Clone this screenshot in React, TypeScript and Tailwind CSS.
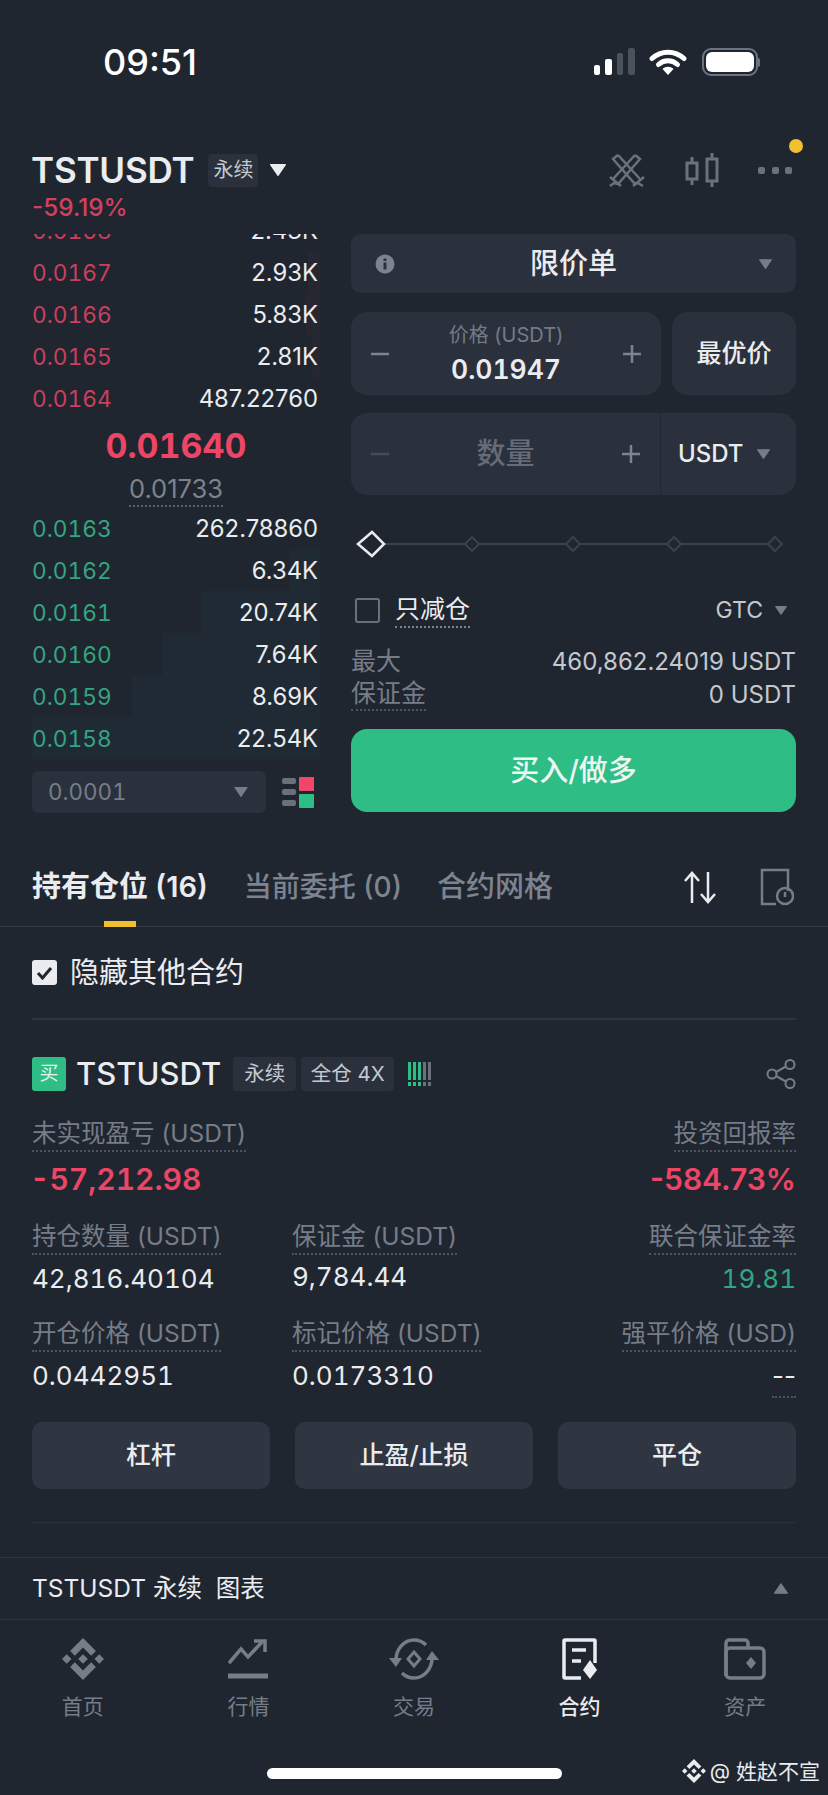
import React from "react";

const FONT = "[font-family:Inter,'Noto_Sans_CJK_SC',sans-serif]";

const asks = [
  ["0.0168", "2.43K", 0],
  ["0.0167", "2.93K", 12],
  ["0.0166", "5.83K", 14],
  ["0.0165", "2.81K", 8],
  ["0.0164", "487.22760", 0],
] as const;

const bids = [
  ["0.0163", "262.78860", 0],
  ["0.0162", "6.34K", 30],
  ["0.0161", "20.74K", 118],
  ["0.0160", "7.64K", 157],
  ["0.0159", "8.69K", 188],
  ["0.0158", "22.54K", 288],
] as const;

function BinanceLogo({ className }: { className: string }) {
  return (
    <svg viewBox="0 0 126.61 126.61" className={className} fill="currentColor">
      <path d="M38.73 53.2l24.59-24.58 24.6 24.6 14.3-14.31L63.32 0 24.43 38.9l14.3 14.3zM0 63.31l14.3-14.31 14.31 14.31-14.31 14.3zM38.73 73.41l24.59 24.59 24.6-24.6 14.31 14.29-38.9 38.91-38.91-38.88-.02-.02zM98 63.31l14.3-14.31 14.31 14.3-14.31 14.32z" />
      <path d="M77.83 63.3L63.32 48.78 52.59 59.51l-1.24 1.23-2.54 2.54 14.51 14.5 14.51-14.47z" />
    </svg>
  );
}

function Caret({ className, up }: { className: string; up?: boolean }) {
  return (
    <svg viewBox="0 0 12 9" className={className} fill="currentColor">
      <path
        d={up ? "M6 .5 11.5 8.5H.5z" : "M.5.5h11L6 8.5z"}
        stroke="currentColor"
        strokeLinejoin="round"
      />
    </svg>
  );
}

function StatusBar() {
  return (
    <div className="flex h-[145px] items-start justify-between pl-[103px] pr-[68px] pt-[41px]">
      <span className="text-[36px] font-medium leading-[42px] text-white">09:51</span>
      <div className="mt-[7px] flex items-center">
        <svg width="42" height="28" viewBox="0 0 42 28">
          <rect x="0" y="17" width="6" height="10" rx="2" fill="#fff" />
          <rect x="11" y="11" width="7" height="16" rx="2" fill="#fff" />
          <rect x="23" y="5" width="6" height="22" rx="2" fill="#4b525d" />
          <rect x="34" y="0" width="7" height="27" rx="2" fill="#4b525d" />
        </svg>
        <svg width="38" height="28" viewBox="0 0 38 28" className="ml-[13px]">
          <path d="M3 10.5C12 2 26 2 35 10.500" fill="none" stroke="#fff" strokeWidth="5" strokeLinecap="round" />
          <path d="M9.500 16.500C15 11.500 23 11.500 28.500 16.500" fill="none" stroke="#fff" strokeWidth="5" strokeLinecap="round" />
          <path d="M13.500 21 19 27l5.500-6c-3-3-8-3-11 0z" fill="#fff" />
        </svg>
        <div className="ml-[15px] flex items-center">
          <div className="h-[28px] w-[56px] rounded-[9px] border-2 border-[#6b7280] p-[2px]">
            <div className="h-full w-full rounded-[6px] bg-white" />
          </div>
          <div className="h-[9px] w-[2px] rounded-r bg-[#6b7280]" />
        </div>
      </div>
    </div>
  );
}

function Header() {
  return (
    <div className="flex h-[89px] items-start justify-between pl-[32px] pr-[36px]">
      <div>
        <div className="flex h-[50px] items-center">
          <span className="-ml-[1px] text-[35px] font-semibold tracking-[-0.2px] text-[#eaecef]">TSTUSDT</span>
          <span className="ml-[14px] flex h-[33px] w-[50px] items-center justify-center rounded-[4px] bg-[#2a313c] text-[20px] text-[#c4c8cf]">
            永续
          </span>
          <Caret className="ml-[12px] h-[12px] w-[16px] text-[#eaecef]" />
        </div>
        <div className="text-[24.300px] font-medium leading-[25px] text-[#d2405f]">-59.19%</div>
      </div>
      <div className="flex h-[50px] items-center text-[#6a717c]">
        <svg width="36" height="34" viewBox="0 0 36 34" fill="none" stroke="currentColor" strokeWidth="2.500">
          <path d="M9 2 4 6l22 25 3-1 5 3M9 2l22 24M26 2l5 4L9 31l-4-1-4 3M26 2 4 26" />
          <path d="M1 24l11 9M35 24l-11 9" />
        </svg>
        <svg width="34" height="36" viewBox="0 0 34 36" fill="none" stroke="currentColor" strokeWidth="3" className="ml-[40px]">
          <rect x="2" y="11" width="10" height="16" />
          <rect x="22" y="7" width="10" height="22" />
          <path d="M7 5v6M7 27v6M27 1v6M27 29v6" />
        </svg>
        <div className="relative ml-[39px] flex w-[34px] justify-between">
          <span className="h-[7px] w-[7px] rounded-[2px] bg-current" />
          <span className="h-[7px] w-[7px] rounded-[2px] bg-current" />
          <span className="h-[7px] w-[7px] rounded-[2px] bg-current" />
          <span className="absolute -right-[11px] -top-[28px] h-[14px] w-[14px] rounded-full bg-[#f0c02f]" />
        </div>
      </div>
    </div>
  );
}

function BookRow({ price, amount, depth, side }: { price: string; amount: string; depth: number; side: "ask" | "bid" }) {
  return (
    <div className="relative flex h-[42px] shrink-0 items-center justify-between pt-[2px]">
      <div
        className={`absolute inset-y-0 right-0 ${side === "ask" ? "bg-[#262731]" : "bg-[#1f2a34]"}`}
        style={{ width: depth }}
      />
      <span className={`relative text-[22.700px] tabular-nums ${side === "ask" ? "text-[#c9405f]" : "text-[#33a583]"}`}>{price}</span>
      <span className="relative pr-[2px] text-[23.800px] text-[#eaecef]">{amount}</span>
    </div>
  );
}

function OrderBook() {
  return (
    <div className="w-[288px] shrink-0">
      <div className="flex h-[185px] flex-col justify-end overflow-hidden">
        {asks.map(([p, a, d]) => (
          <BookRow key={p} price={p} amount={a} depth={d} side="ask" />
        ))}
      </div>
      <div className="flex h-[88px] flex-col items-center">
        <div className="mt-[7px] h-[40px] text-[34px] font-bold leading-[40px] tabular-nums text-[#ec4565]">0.01640</div>
        <div className="mt-[7px] h-[34px] border-b-2 border-dotted border-[#5c636e] text-[25.500px] leading-[32px] text-[#7c838e]">
          0.01733
        </div>
      </div>
      <div className="flex flex-col">
        {bids.map(([p, a, d]) => (
          <BookRow key={p} price={p} amount={a} depth={d} side="bid" />
        ))}
      </div>
      <div className="mt-[12px] flex items-center justify-between">
        <div className="flex h-[42px] w-[234px] items-center justify-between rounded-[6px] bg-[#2a313c] pl-[16px] pr-[18px] text-[22.400px] tabular-nums text-[#767d88]">
          0.0001
          <Caret className="h-[10px] w-[14px] text-[#767d88]" />
        </div>
        <svg width="32" height="32" viewBox="0 0 32 32" className="mr-[6px]">
          <rect x="0" y="2" width="14" height="6" rx="2" fill="#6a717c" />
          <rect x="0" y="13" width="14" height="6" rx="2" fill="#6a717c" />
          <rect x="0" y="24" width="14" height="6" rx="2" fill="#6a717c" />
          <rect x="17" y="1" width="15" height="14" rx="1" fill="#f0476a" />
          <rect x="17" y="18" width="15" height="14" rx="1" fill="#2ebd85" />
        </svg>
      </div>
    </div>
  );
}

function Plus({ dim }: { dim?: boolean }) {
  return (
    <svg width="20" height="20" viewBox="0 0 20 20" stroke={dim ? "#5b626d" : "#7d848f"} strokeWidth="2.500">
      <path d="M10 1v18M1 10h18" />
    </svg>
  );
}

function Minus({ dim }: { dim?: boolean }) {
  return (
    <svg width="20" height="20" viewBox="0 0 20 20" stroke={dim ? "#454c57" : "#7d848f"} strokeWidth="2.500">
      <path d="M1 10h18" />
    </svg>
  );
}

function OrderForm() {
  return (
    <div className="ml-[31px] w-[445px]">
      <div className="flex h-[59px] items-center justify-between rounded-[10px] bg-[#2a313c] px-[24px]">
        <svg width="20" height="20" viewBox="0 0 20 20">
          <circle cx="10" cy="10" r="9.500" fill="#7d848f" />
          <rect x="8.500" y="8.500" width="3" height="7" fill="#2a313c" />
          <rect x="8.500" y="4.500" width="3" height="2.500" fill="#2a313c" />
        </svg>
        <span className="text-[29px] font-medium text-[#eaecef]">限价单</span>
        <div className="flex w-[20px] justify-end">
          <Caret className="h-[10px] w-[13px] text-[#767d88]" />
        </div>
      </div>
      <div className="mt-[19px] flex h-[83px] gap-[11px]">
        <div className="flex w-[310px] items-center justify-between rounded-[16px] bg-[#2a313c] px-[19px]">
          <Minus />
          <div className="flex flex-col items-center">
            <span className="text-[20px] leading-[26px] text-[#747b86]">价格 (USDT)</span>
            <span className="mt-[5px] text-[26.500px] font-semibold leading-[32px] tabular-nums text-[#eaecef]">0.01947</span>
          </div>
          <Plus />
        </div>
        <div className="flex flex-1 items-center justify-center rounded-[16px] bg-[#2a313c] text-[25px] font-medium text-[#eaecef]">
          最优价
        </div>
      </div>
      <div className="mt-[18px] flex h-[82px] items-center rounded-[16px] bg-[#2a313c]">
        <div className="flex h-full w-[310px] items-center justify-between border-r border-[#232933] px-[19px]">
          <Minus dim />
          <span className="text-[29px] font-medium text-[#656c77]">数量</span>
          <Plus />
        </div>
        <span className="ml-[17px] text-[24px] font-medium text-[#eaecef]">USDT</span>
        <Caret className="ml-[13px] h-[10px] w-[13px] text-[#767d88]" />
      </div>
      <svg width="445" height="30" viewBox="0 0 445 30" className="mt-[34px]" fill="none">
        <path d="M34 15h388" stroke="#3b424d" strokeWidth="2" />
        <path d="M21 3 33 15 21 27 7 15z" stroke="#eaecef" strokeWidth="2.500" fill="#1f2630" />
        {[121, 222, 323, 424].map((x) => (
          <path key={x} d={`M${x} 8l7 7-7 7-7-7z`} stroke="#3b424d" strokeWidth="2" fill="#1f2630" />
        ))}
      </svg>
      <div className="mt-[33px] flex h-[36px] items-center">
        <span className="ml-[4px] h-[25px] w-[25px] rounded-[3px] border-2 border-[#6a717c]" />
        <span className="ml-[15px] border-b-2 border-dotted border-[#7d848f] text-[25px] leading-[33px] text-[#eaecef]">
          只减仓
        </span>
        <span className="ml-auto text-[23px] text-[#c4c8cf]">GTC</span>
        <Caret className="ml-[12px] mr-[9px] h-[9px] w-[12px] text-[#767d88]" />
      </div>
      <div className="mt-[17px] flex h-[33px] items-center justify-between text-[24px] text-[#c4c8cf]">
        <span className="text-[25px] text-[#767d88]">最大</span>
        <span>460,862.24019 USDT</span>
      </div>
      <div className="flex h-[33px] items-center justify-between text-[24px] text-[#c4c8cf]">
        <span className="border-b-2 border-dotted border-[#4d545f] text-[25px] leading-[31px] text-[#767d88]">保证金</span>
        <span>0 USDT</span>
      </div>
      <div className="mt-[18px] flex h-[83px] items-center justify-center rounded-[16px] bg-[#2ebd85] text-[29px] font-medium text-[#eef6f2]">
        买入/做多
      </div>
    </div>
  );
}

function Tabs() {
  return (
    <div className="flex h-[114px] items-start border-b border-[#353c47] pl-[32px] pr-[34px] pt-[54px]">
      <div className="flex flex-col items-center">
        <span className="text-[29px] font-semibold leading-[40px] text-[#eaecef]">持有仓位 (16)</span>
        <span className="mt-[14px] h-[6px] w-[32px] bg-[#f0c02f]" />
      </div>
      <span className="ml-[36px] text-[28px] font-medium leading-[40px] text-[#7d848f]">当前委托 (0)</span>
      <span className="ml-[35px] text-[29px] font-medium leading-[40px] text-[#7d848f]">合约网格</span>
      <svg width="34" height="33" viewBox="0 0 34 33" fill="none" stroke="#eaecef" strokeWidth="2.500" className="ml-auto mt-[4px]">
        <path d="M9 32V2M2 10l7-8 7 8M25 1v30M18 23l7 8 7-8" />
      </svg>
      <svg width="34" height="38" viewBox="0 0 34 38" fill="none" stroke="#767d88" strokeWidth="2.500" className="ml-[43px] mt-[1px]">
        <path d="M16 36H2V2h26v21" />
        <circle cx="25" cy="28" r="8" />
        <path d="M25 24v5" />
      </svg>
    </div>
  );
}

function Metric({ label, value, valueClass, right, offset, dottedValue }: { label: string; value: string; valueClass?: string; right?: boolean; offset?: boolean; dottedValue?: boolean }) {
  return (
    <div className={`flex flex-col ${right ? "items-end" : "items-start"}`}>
      <span className="h-[36px] border-b-2 border-dotted border-[#4d545f] text-[24.500px] leading-[34px] text-[#767d88]">
        {label}
      </span>
      <span
        className={`mt-[4px] text-[26px] leading-[40px] ${dottedValue ? "" : "tabular-nums"} ${offset ? "-translate-y-[2px]" : ""} ${dottedValue ? "border-b-2 border-dotted border-[#4d545f]" : ""} ${valueClass ?? "text-[#eaecef]"}`}
      >
        {value}
      </span>
    </div>
  );
}

function Position() {
  return (
    <div className="px-[32px]">
      <div className="flex h-[91px] items-center">
        <span className="flex h-[25px] w-[25px] items-center justify-center rounded-[3px] bg-[#eaecef]">
          <svg width="17" height="14" viewBox="0 0 17 14" fill="none" stroke="#1f2630" strokeWidth="3">
            <path d="M2 7l4.500 5L15 2" />
          </svg>
        </span>
        <span className="ml-[13px] text-[29px] text-[#eaecef]">隐藏其他合约</span>
      </div>
      <div className="flex h-[73px] items-end border-t-2 border-[#2e3540]">
        <div className="flex h-[34px] w-full items-center">
          <span className="flex h-[34px] w-[34px] items-center justify-center rounded-[3px] bg-[#2ebd85] text-[19px] text-[#e6f5ee]">买</span>
          <span className="ml-[10px] text-[31px] font-medium text-[#eaecef]">TSTUSDT</span>
          <span className="ml-[12px] flex h-[34px] w-[63px] items-center justify-center rounded-[4px] bg-[#2a313c] text-[20.500px] text-[#c4c8cf]">永续</span>
          <span className="ml-[5px] flex h-[34px] w-[93px] items-center justify-center rounded-[4px] bg-[#2a313c] text-[20.500px] text-[#c4c8cf]">全仓 4X</span>
          <svg width="24" height="24" viewBox="0 0 24 24" className="ml-[14px]">
            {[0, 5, 10, 15, 20].map((x, i) => (
              <g key={x} fill={i < 3 ? "#2ebd85" : "#6a717c"}>
                <rect x={x} y="0" width="3" height="18" />
                <rect x={x} y="20" width="3" height="4" />
              </g>
            ))}
          </svg>
          <svg width="30" height="30" viewBox="0 0 30 30" fill="none" stroke="#767d88" strokeWidth="2" className="ml-auto">
            <circle cx="6" cy="15" r="4.500" />
            <circle cx="24" cy="5.500" r="4.500" />
            <circle cx="24" cy="24.500" r="4.500" />
            <path d="M10 13l10-5.500M10 17l10 5.500" />
          </svg>
        </div>
      </div>
      <div className="mt-[25px] flex items-start justify-between">
        <div className="flex flex-col items-start">
          <span className="h-[36px] border-b-2 border-dotted border-[#4d545f] text-[24.500px] leading-[34px] text-[#767d88]">未实现盈亏 (USDT)</span>
          <span className="-ml-[2px] mt-[7px] text-[30px] font-semibold leading-[40px] tabular-nums text-[#ec4565]">-57,212.98</span>
        </div>
        <div className="flex flex-col items-end">
          <span className="h-[36px] border-b-2 border-dotted border-[#4d545f] text-[24.500px] leading-[34px] text-[#767d88]">投资回报率</span>
          <span className="mt-[7px] text-[30px] font-semibold leading-[40px] text-[#ec4565]">-584.73%</span>
        </div>
      </div>
      <div className="mt-[20px] grid grid-cols-[260px_1fr_auto] gap-y-[17px]">
        <Metric label="持仓数量 (USDT)" value="42,816.40104" />
        <Metric label="保证金 (USDT)" value="9,784.44" offset />
        <Metric label="联合保证金率" value="19.81" valueClass="text-[#33a583]" right />
        <Metric label="开仓价格 (USDT)" value="0.0442951" />
        <Metric label="标记价格 (USDT)" value="0.0173310" />
        <Metric label="强平价格 (USD)" value="--" right dottedValue />
      </div>
      <div className="mt-[24px] flex justify-between">
        {["杠杆", "止盈/止损", "平仓"].map((t) => (
          <div key={t} className="flex h-[67px] w-[238px] items-center justify-center rounded-[10px] bg-[#2f3641] text-[25px] font-medium text-[#eaecef]">
            {t}
          </div>
        ))}
      </div>
      <div className="mt-[33px] border-t border-[#2a313c]" />
    </div>
  );
}

function NavItem({ label, active, children }: { label: string; active?: boolean; children: React.ReactNode }) {
  return (
    <div className={`flex w-[165.600px] flex-col items-center ${active ? "text-[#eaecef]" : "text-[#767d88]"}`}>
      <div className="flex h-[44px] items-center justify-center">{children}</div>
      <span className={`mt-[12px] text-[21px] leading-[28px] ${active ? "font-medium" : ""}`}>{label}</span>
    </div>
  );
}

function BottomNav() {
  return (
    <div className="flex pt-[17px]">
      <NavItem label="首页">
        <BinanceLogo className="h-[44px] w-[42px]" />
      </NavItem>
      <NavItem label="行情">
        <svg width="40" height="42" viewBox="0 0 40 42" fill="none" stroke="currentColor">
          <path d="M1 25 13 11l7 8L34 4" strokeWidth="3.500" />
          <path d="M26 3h11v11" strokeWidth="3.500" />
          <path d="M0 38h40" strokeWidth="5" />
        </svg>
      </NavItem>
      <NavItem label="交易">
        <svg width="50" height="42" viewBox="0 0 50 42" fill="none" stroke="currentColor" strokeWidth="3.500">
          <path d="M7 22C7 11 15 2 25 2c5 0 9 2 12 5" />
          <path d="M43 20c0 11-8 20-18 20-5 0-9-2-12-5" />
          <path d="M0 20h13L7 29zM37 22h13l-7-9z" fill="currentColor" stroke="none" />
          <path d="M25 14l6 7-6 7-6-7z" strokeWidth="3" />
        </svg>
      </NavItem>
      <NavItem label="合约" active>
        <svg width="36" height="42" viewBox="0 0 36 42" fill="none" stroke="currentColor" strokeWidth="3.500">
          <path d="M19 40H3a1 1 0 0 1-1-1V3a1 1 0 0 1 1-1h29a1 1 0 0 1 1 1v22" />
          <path d="M10 12h14M10 23h9" />
          <path d="M28 22l7 10-7 9-7-9z" fill="currentColor" stroke="none" />
        </svg>
      </NavItem>
      <NavItem label="资产">
        <svg width="42" height="42" viewBox="0 0 42 42" fill="none" stroke="currentColor" strokeWidth="3.500">
          <path d="M2 38V5a3 3 0 0 1 3-3h16a3 3 0 0 1 3 3v5" />
          <rect x="2" y="10" width="38" height="30" rx="4" />
          <path d="M27 19l5 6-5 6-5-6z" fill="currentColor" stroke="none" />
        </svg>
      </NavItem>
    </div>
  );
}

export default function App() {
  return (
    <div className={`relative h-[1795px] w-full overflow-hidden bg-[#1f2630] ${FONT}`}>
      <StatusBar />
      <Header />
      <div className="flex items-start pl-[32px]">
        <OrderBook />
        <OrderForm />
      </div>
      <Tabs />
      <Position />
      <div className="mt-[34px] flex h-[63px] items-center justify-between border-y border-[#2f3641] pl-[32px] pr-[40px]">
        <span className="text-[24.500px] text-[#eaecef]">TSTUSDT 永续&nbsp; 图表</span>
        <Caret up className="h-[11px] w-[14px] text-[#767d88]" />
      </div>
      <BottomNav />
      <div className="mt-[47px] flex justify-center">
        <div className="h-[11px] w-[295px] rounded-full bg-white" />
      </div>
      <div className="absolute bottom-[8px] right-[8px] flex items-center text-[21px] text-[#eaecef]">
        <BinanceLogo className="h-[26px] w-[24px]" />
        <span className="ml-[4px]">@ 姓赵不宣</span>
      </div>
    </div>
  );
}
